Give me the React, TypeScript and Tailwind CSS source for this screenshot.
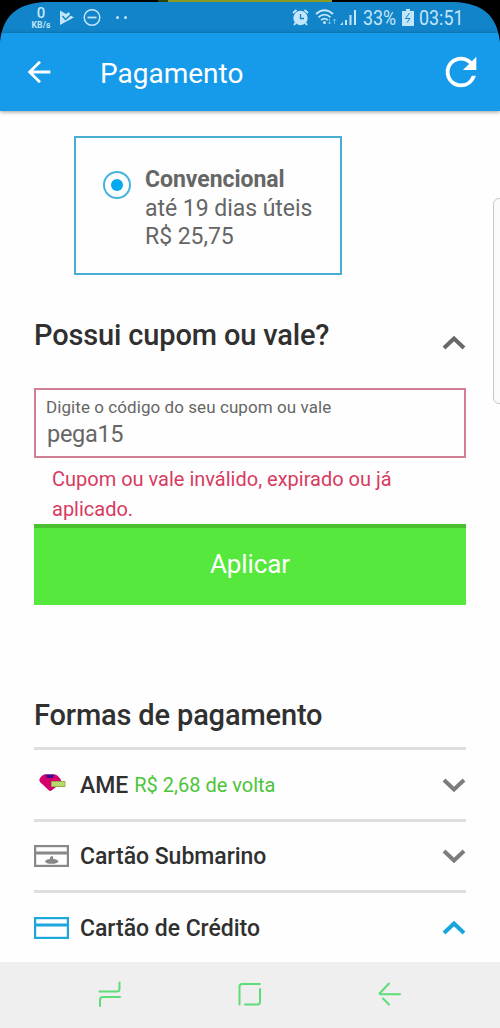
import type { ReactNode } from 'react';
import { MdArrowBack, MdRefresh } from 'react-icons/md';

interface PaymentRowProps {
  icon: ReactNode;
  name: string;
  cashback?: string;
  open?: boolean;
}

function Chevron({ up, className }: { up?: boolean; className?: string }) {
  return (
    <svg width="24" height="16" viewBox="0 0 24 16" fill="none" stroke="currentColor" strokeWidth="4" className={className}>
      <path d={up ? 'M2 13 L12 3.5 L22 13' : 'M2 3 L12 12.5 L22 3'} />
    </svg>
  );
}

function StatusBar() {
  return (
    <div className="h-[33px] bg-black">
      <div className="ml-[158px] h-[2px] w-[174px] border-l-[10px] border-[#25470f] bg-[#8d9a22]" />
      <div className="flex h-[31px] items-center bg-[#1284c9] text-[#c3e6fa]">
        <div className="ml-[31px] flex w-5 flex-col items-center pt-px font-['Roboto']">
          <span className="text-[15px] leading-[13px] font-medium">0</span>
          <span className="text-[8.5px] leading-[10px] font-bold tracking-[0.2px]">KB/s</span>
        </div>
        <svg className="ml-[9px]" width="14" height="16" viewBox="0 0 14 16">
          <path d="M0 0.5 L6 4 L9 2 L10 5 L13.8 7.5 L0 15 Z" fill="currentColor" />
          <path d="M2.5 6 L5.5 9.5 L12.5 3" fill="none" stroke="#1284c9" strokeWidth="1.4" />
        </svg>
        <svg className="ml-[9px]" width="18" height="18" viewBox="0 0 18 18" fill="none" stroke="currentColor" strokeWidth="1.5">
          <circle cx="9" cy="8.5" r="7.8" />
          <path d="M4.5 8.5 H13.5" strokeWidth="1.8" />
        </svg>
        <div className="ml-[15px] flex gap-[5px]">
          <span className="size-[3px] rounded-full bg-current" />
          <span className="size-[3px] rounded-full bg-current" />
        </div>
        <svg className="ml-[165px]" width="17" height="17" viewBox="0 0 17 17">
          <circle cx="8.5" cy="9" r="7.2" fill="currentColor" />
          <path d="M1 4 L4.5 1 M16 4 L12.5 1 M3.5 14 L2 16 M13.5 14 L15 16" stroke="currentColor" strokeWidth="2" />
          <path d="M8.5 5 V9.5 H12" fill="none" stroke="#1284c9" strokeWidth="1.3" />
        </svg>
        <svg className="ml-[6px]" width="22" height="17" viewBox="0 0 22 17" fill="none" stroke="currentColor" strokeWidth="1.8">
          <path d="M1 5 Q9.5 -2.5 18 5 M3.5 8.2 Q9.5 3 15.5 8.2 M6 11.2 Q9.5 8 13 11.2" />
          <circle cx="9.5" cy="13.5" r="1.5" fill="currentColor" stroke="none" />
          <path d="M14.5 10 V15 M13 13.3 L14.5 15 L16 13.3 M19.5 15 V10 M18 11.7 L19.5 10 L21 11.7" strokeWidth="1" opacity=".5" />
        </svg>
        <svg className="ml-[3px]" width="17" height="17" viewBox="0 0 17 17" fill="currentColor">
          <path d="M0 16 L3 13 V16 Z M5 11 H7 V16 H5 Z M9.5 6 H11.5 V16 H9.5 Z M14 1 H16 V16 H14 Z" />
        </svg>
        <div className="ml-[6px] w-[33px] pt-[2px] font-['Roboto'] text-[21px] leading-none">
          <span className="inline-block origin-left scale-x-[0.85]">33%</span>
        </div>
        <svg className="ml-[6px]" width="12" height="17" viewBox="0 0 12 17">
          <path d="M4 0 H8 V2 H12 V17 H0 V2 H4 Z" fill="currentColor" />
          <path d="M7.5 4 L3.5 9.5 H8 L5 13.5" fill="none" stroke="#1284c9" strokeWidth="1" />
        </svg>
        <div className="ml-[5px] pt-[2px] font-['Roboto'] text-[21px] leading-none">
          <span className="inline-block origin-left scale-x-[0.85]">03:51</span>
        </div>
      </div>
    </div>
  );
}

// Screen edges are rounded, so the black bezel shows in the corners
function BezelCorner({ className }: { className: string }) {
  return (
    <svg className={className} width="46" height="42" viewBox="0 0 46 42">
      <path d="M0 0 H46 V2 C18 3 3 15 0 42 Z" fill="#000" />
    </svg>
  );
}

function AmeIcon() {
  return (
    <svg width="35" height="26" viewBox="0 0 35 26">
      <path d="M10 2.5 H21 Q24 3 27 8 V11 L17.5 18.5 Q16 19.5 14.5 18 L6 10 Q4.5 8 6 6 Q8 3 10 2.5 Z" fill="#d4006e" />
      <path d="M11 2.5 H20.5 L18.5 6 H13.5 Z" fill="#3a0a8c" />
      <path d="M17.5 9.5 H31 V14.5 H17.5 Z" fill="#b7dc6c" stroke="#9aa84a" />
    </svg>
  );
}

function CardIcon({ submarine }: { submarine?: boolean }) {
  return (
    <svg width="35" height="22" viewBox="0 0 35 22" fill="none" stroke="currentColor" strokeWidth="2.2">
      <rect x="1.1" y="1.1" width="32.8" height="19.8" />
      <path d="M1 8 H34" strokeWidth="3" />
      {submarine && (
        <path d="M11 16.5 Q12 14.3 16 14 V12.5 L17.5 11 H18.5 L19.5 14 Q23.5 14.3 24.5 16.5 Q23 18.8 17.5 18.8 Q12 18.8 11 16.5 Z" fill="currentColor" stroke="none" />
      )}
    </svg>
  );
}

function PaymentRow({ icon, name, cashback, open }: PaymentRowProps) {
  return (
    <div className="flex h-[71.5px] items-center border-t-[3px] border-[#dedede] pt-px">
      <div className="w-[35px]">{icon}</div>
      <span className="ml-[11px] pt-[2px] text-[23px] font-medium tracking-[-0.03px] text-[#303030]">{name}</span>
      {cashback && <span className="ml-[6px] text-[20px] text-[#4cc43a]">{cashback}</span>}
      <Chevron up={open} className={open ? 'ml-auto text-[#16a6dc]' : 'ml-auto text-[#7c7c7c]'} />
    </div>
  );
}

export default function App() {
  return (
    <div className="relative flex h-[1028px] w-[500px] flex-col overflow-hidden bg-[#fefefe] font-['Roboto',sans-serif]">
      <StatusBar />
      <header className="flex h-[78px] shrink-0 items-center bg-[#169aea] text-white shadow-[0_1px_4px_rgba(0,0,0,0.4)]">
        <MdArrowBack className="ml-[22px] size-[34px]" />
        <h1 className="ml-[44px] pt-[3px] text-[28px]">Pagamento</h1>
        <MdRefresh className="mr-[16px] ml-auto size-[46px]" />
      </header>

      <main className="flex-1 overflow-hidden px-[34px] pt-[25px]">
        <div className="ml-[40px] flex h-[139px] w-[268px] border-2 border-[#4aaed4] pt-[27px] pl-[27px]">
          <span className="mt-[6px] flex size-[28px] items-center justify-center rounded-full border-2 border-[#45b4de]">
            <span className="size-[12px] rounded-full bg-[#05a9f0]" />
          </span>
          <div className="ml-[14px] pt-px text-[23px] leading-[28.5px] tracking-[-0.04px] text-[#666]">
            <p className="font-bold">Convencional</p>
            <p>até 19 dias úteis</p>
            <p>R$ 25,75</p>
          </div>
        </div>

        <div className="mt-[40px] flex h-[40px] justify-between">
          <h2 className="text-[29px] leading-[40px] font-medium tracking-[-0.15px] text-[#303030]">Possui cupom ou vale?</h2>
          <Chevron up className="mt-[20px] text-[#686868]" />
        </div>

        <div className="mt-[33px] h-[70px] border-2 border-[#d27f94] pt-[7px] pl-[10px] text-[#666]">
          <p className="text-[17px] leading-[20px] tracking-[0.07px]">Digite o código do seu cupom ou vale</p>
          <p className="mt-[4px] pl-px text-[23.5px] leading-[26px] tracking-[-0.3px]">pega15</p>
        </div>
        <p className="h-[66px] pt-[7px] pl-[18px] text-[20px] leading-[29.5px] text-[#d83a60]">
          Cupom ou vale inválido, expirado ou já<br />aplicado.
        </p>
        <button className="block h-[81px] w-full border-t-4 border-[#4abf32] bg-[#56e83c] pb-[4px] text-[26px] tracking-[-0.1px] text-white">
          Aplicar
        </button>

        <h2 className="mt-[90px] text-[29px] leading-[40px] font-medium tracking-[-0.15px] text-[#303030]">Formas de pagamento</h2>
        <div className="mt-[12px]">
          <PaymentRow icon={<AmeIcon />} name="AME" cashback="R$ 2,68 de volta" />
          <PaymentRow icon={<span className="text-[#888]"><CardIcon submarine /></span>} name="Cartão Submarino" />
          <PaymentRow icon={<span className="text-[#1ca6de]"><CardIcon /></span>} name="Cartão de Crédito" open />
        </div>
      </main>

      <nav className="flex h-[66px] shrink-0 items-center justify-between bg-[#efefef] px-[96px] pb-[4px] text-[#5ddc78]">
        <svg width="26" height="28" viewBox="0 0 26 28" fill="none" stroke="currentColor" strokeWidth="2" strokeLinecap="round">
          <path d="M3.5 12.5 H21 Q23.5 12.5 23.5 10 V3.5 M24 18 H7 Q4 18 4 21 V27" />
        </svg>
        <svg width="26" height="28" viewBox="0 0 26 28" fill="none" stroke="currentColor" strokeWidth="2" strokeLinecap="round">
          <path d="M23 5 H5 Q2.5 5 2.5 7.5 V25.5 M23 10 V22.5 Q23 25.5 20.5 25.5 H8" />
        </svg>
        <svg width="26" height="28" viewBox="0 0 26 28" fill="none" stroke="currentColor" strokeWidth="2" strokeLinecap="round" strokeLinejoin="round">
          <path d="M11 4.5 L1.5 14.5 L2.5 15.3 H22 M5 19.5 L11 25.5" />
        </svg>
      </nav>

      <BezelCorner className="absolute top-0 left-0" />
      <BezelCorner className="absolute top-0 right-0 -scale-x-100" />
      {/* edge panel handle */}
      <div className="absolute top-[198px] -right-[6px] h-[206px] w-[13px] rounded-[6px] border border-[#c8c8c8] bg-[#fafafa]" />
    </div>
  );
}
